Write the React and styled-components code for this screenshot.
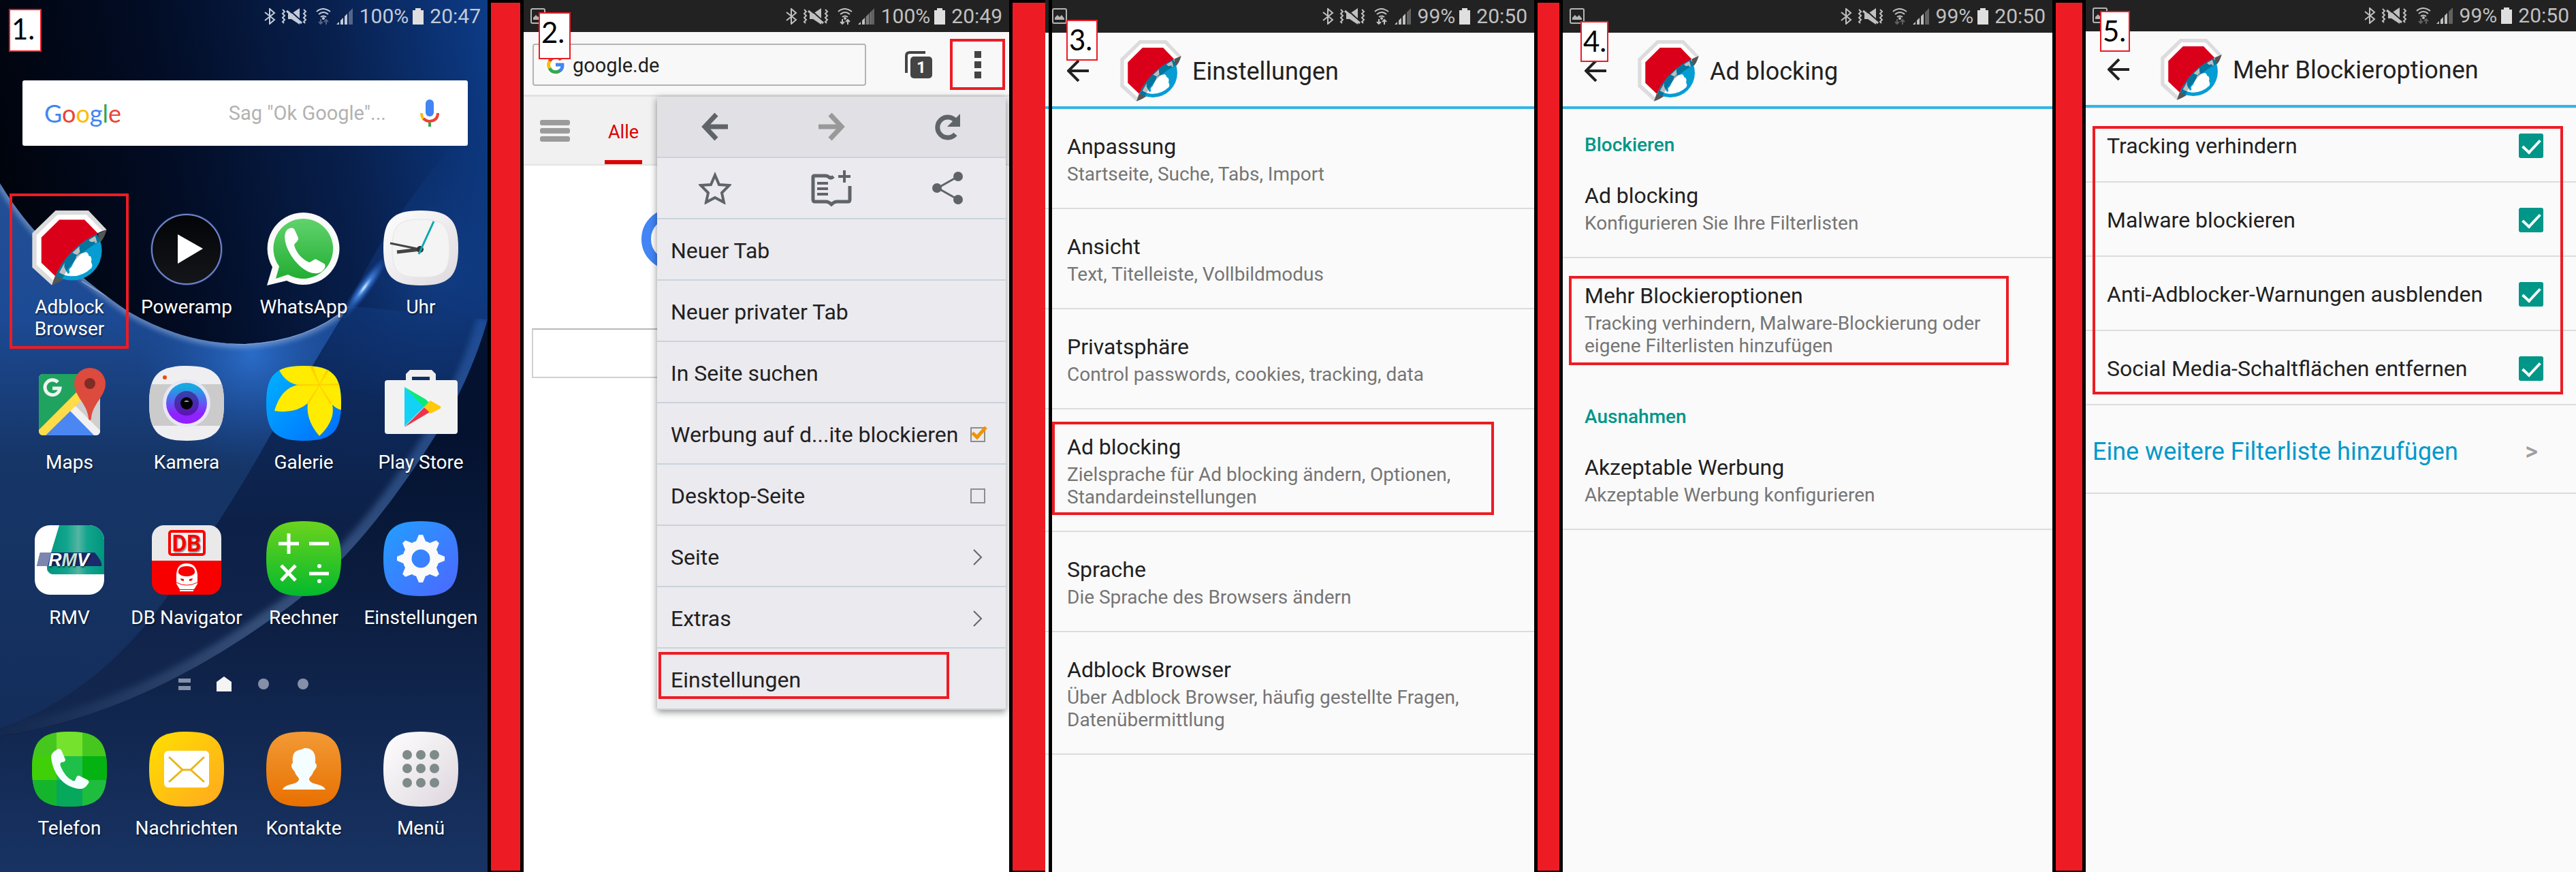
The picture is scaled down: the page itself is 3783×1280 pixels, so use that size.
import React from 'react';
import styled, { createGlobalStyle, css } from 'styled-components';

const GlobalStyle = createGlobalStyle`
  *, *::before, *::after { box-sizing: border-box; }
  body {
    margin: 0;
    font-family: Roboto, "Liberation Sans", sans-serif;
    color: #212121;
  }
  button, input { font: inherit; color: inherit; }
  button { border: 0; padding: 0; background: none; cursor: pointer; }
  a { color: inherit; text-decoration: none; }
  svg { display: block; flex: none; }
`;

const RED = '#ed1c24';

/* ---------- page ---------- */

const Page = styled.main`
  display: flex;
  min-height: 100vh;
  background: #fff;
`;

const Divider = styled.div`
  flex: 0 0 ${p => p.$width}px;
  background: ${RED};
  border: 5px solid #000;
  border-right-width: ${p => (p.$open ? 0 : 5)}px;
  border-top-width: 4px;
  border-bottom-width: 2px;
`;

const Screen = styled.section`
  position: relative;
  flex: ${p => p.$grow} 1 0;
  min-width: 0;
  overflow: hidden;
  display: flex;
  flex-direction: column;
  background: ${p => p.$bg || '#fafafa'};

  ${p => p.$rule && css`
    &::before {
      content: '';
      position: absolute;
      z-index: 2;
      top: 0;
      bottom: 0;
      left: 5px;
      width: 5px;
      background: #000;
    }
  `}
`;

const Step = styled.span`
  position: absolute;
  z-index: 4;
  left: ${p => p.$left}px;
  top: ${p => p.$top}px;
  width: ${p => p.$width || 46}px;
  height: ${p => p.$height || 60}px;
  padding-left: 2px;
  border: 2px solid ${RED};
  background: #fff;
  color: #000;
  font-family: Lato, "Open Sans", sans-serif;
  font-size: 42px;
  line-height: 54px;
`;

const marked = css`
  position: relative;
  &::after {
    content: '';
    position: absolute;
    z-index: 3;
    border: 4px solid ${RED};
    pointer-events: none;
    top: ${p => p.$mark && p.$mark.top}px;
    left: ${p => p.$mark && p.$mark.left}px;
    right: ${p => p.$mark && p.$mark.right}px;
    height: ${p => p.$mark && p.$mark.height}px;
  }
`;

/* ---------- status bar ---------- */

const StatusRow = styled.div`
  position: relative;
  display: flex;
  align-items: center;
  height: ${p => p.$height || 48}px;
  padding: 0 10px;
  background: ${p => (p.$clear ? 'transparent' : '#222')};
  color: ${p => (p.$clear ? '#c3cbd8' : '#c0c0c0')};
  font-size: 30px;
  line-height: 48px;
`;

const Percent = styled.span`
  margin-left: auto;
  display: flex;
  align-items: center;
  gap: 9px;
`;

const Battery = styled.svg`
  margin: 0 9px 0 6px;
`;

function StatusBar({ percent, time, clear, height, picture = true, weak, idle }) {
  return (
    <StatusRow $clear={clear} $height={height}>
      {picture && (
        <svg width="22" height="24" viewBox="0 0 22 24" fill="none">
          <rect x="1" y="1" width="20" height="21" rx="2" stroke="#b5b5b5" strokeWidth="2" />
          <path d="M4 17v-3l4-4 3 3 3-3 4 5v2z" fill="#b5b5b5" />
        </svg>
      )}
      <Percent>
        <svg width="131" height="24" viewBox="0 0 131 24" fill="none" stroke="currentColor">
          <path d="M1 6l14 11-7 6V1l7 6L1 18" strokeWidth="2" />
          <path d="M35 8h5l12-8v24l-12-8h-5z" fill="currentColor" stroke="none" />
          <path d="M35 1l21 19" strokeWidth="2" stroke={clear ? '#0a2150' : '#222'} />
          <path d="M33 4l22 18" strokeWidth="3" />
          <path d="M27 2l3 3-3 3 3 3-3 3 3 3-3 3 2 2M58 2l3 3-3 3 3 3-3 3 3 3-3 3 2 2" strokeWidth="2" />
          <path d="M77 5q9-8 20 0M80 9q7-6 14 0M83 13q4-3 8 0" strokeWidth="2" />
          <circle cx="87" cy="15" r="2" fill="currentColor" stroke="none" />
          <path d="M83 16v6M80 20l3 3 3-3M91 24v-6M88 20l3-3 3 3" strokeWidth="2" opacity={idle ? 0.4 : 1} />
          <path d="M106 24l4-4v4zM112 24v-6l4-4v10z" fill="currentColor" stroke="none" />
          <path d="M118 24V12l4-4v16z" fill="currentColor" stroke="none" opacity={weak ? 0.4 : 1} />
          <path d="M124 24V6l6-6v24z" fill="currentColor" stroke="none" opacity="0.4" />
          {weak && <path d="M117 24V13l8-8v19z" fill="currentColor" stroke="none" opacity="0.3" />}
        </svg>
        <span>{percent}</span>
      </Percent>
      <Battery width="16" height="24" viewBox="0 0 16 24">
        <path d="M0 3h4V0h8v3h4v21H0z" fill="#dfdfdf" />
      </Battery>
      <span>{time}</span>
    </StatusRow>
  );
}

/* ---------- shared drawings ---------- */

function AdblockLogo({ size }) {
  return (
    <svg width={size} height={size} viewBox="142 123 326 328">
      <defs>
        <clipPath id="globe"><circle cx="316" cy="298" r="131" /></clipPath>
        <clipPath id="fold"><path d="M468 207Q300 245 228 450H480V207z" /></clipPath>
      </defs>
      <path d="M244 123H388L468 207Q290 260 228 450L142 372V222z" fill="#dcdcdc" />
      <path d="M252 142H380L449 212Q290 280 234 428L161 361V231z" fill="#fff" />
      <path d="M468 207L430 224L436 265Q456 250 468 207zM228 450L243 408L285 420Q262 438 228 450z" fill="#555" />
      <g clipPath="url(#fold)">
        <circle cx="316" cy="298" r="131" fill="#069dd3" />
        <path d="M350 312l28-7 8 6 4 10 8 3 4 12-2 12 5 14-3 12q-42 40-94 36-28-3-48-16l26-46 34-14z" fill="#fff" />
        <path d="M388 255l6-6 24-14 8 28-8 3-6-6-12 2z" fill="#fff" />
        <path d="M318 308l30-28 4 24-14 14z" fill="#fff" />
        <path d="M348 288l40-36 12 10 20-4-34 32-22 16-12 2zM298 330l22-18 16 4-2 14-20 40-10 10 2 16-8 4-8-14-8-16 2-26z" fill="#069dd3" />
      </g>
      <path d="M430 224Q300 285 243 410L272 424Q332 310 440 258z" fill="#000" opacity="0.25" clipPath="url(#globe)" />
      <path d="M261 163H371L430 224Q300 285 243 410L182 352V241z" fill="#da001a" />
    </svg>
  );
}

/* ---------- home screen ---------- */

const Wallpaper = styled.svg`
  position: absolute;
  inset: 0;
  width: 100%;
  height: 100%;
`;

const SearchCard = styled.form`
  position: relative;
  display: flex;
  align-items: center;
  height: 96px;
  margin: 70px 29px 95px 33px;
  padding: 0 42px 0 32px;
  border-radius: 3px;
  background: #fff;
`;

const Wordmark = styled.span`
  font-family: Lato, sans-serif;
  font-size: 36px;
  line-height: 40px;
`;

const Letter = styled.span`
  color: ${p => p.$color};
`;

const VoiceInput = styled.input`
  flex: 1;
  min-width: 0;
  margin-right: 48px;
  border: 0;
  outline: 0;
  background: none;
  text-align: right;
  font-size: 29px;
  &::placeholder { color: #b2b2b2; opacity: 1; }
`;

const AppGrid = styled.nav`
  position: relative;
  display: grid;
  grid-template-columns: repeat(4, 1fr);
  grid-auto-rows: ${p => p.$row}px;
  padding: 0 12px 0 16px;
`;

const AppTile = styled.button`
  display: flex;
  flex-direction: column;
  align-items: center;
  gap: 16px;
  color: #fff;
  font-size: 28px;
  line-height: 32px;
  text-shadow: 1px 2px 2px rgba(0, 0, 0, .5);
  ${p => p.$mark && marked}
`;

const AppLabel = styled.span`
  white-space: pre-line;
`;

const Pager = styled.svg`
  position: relative;
  margin: 0 auto 57px;
`;

const SQUIRCLE = 'M55 0C97 0 110 14 110 55S97 110 55 110 0 96 0 55 13 0 55 0Z';
const HANDSET = 'M30 29c4-4 10-5 12 0l5 11c1 5-5 7-6 11 3 11 12 21 22 25 4 0 7-6 11-4l11 6c4 3 0 9-4 12-10 6-24 0-36-13S22 41 30 29z';

function Icon({ children }) {
  return <svg width="110" height="110" viewBox="0 0 110 110">{children}</svg>;
}

const PowerampIcon = () => (
  <Icon>
    <defs>
      <linearGradient id="amp" x2="0" y2="1"><stop stopColor="#020408" /><stop offset="1" stopColor="#141619" /></linearGradient>
    </defs>
    <circle cx="55" cy="57" r="53" fill="#5570c8" opacity="0.35" />
    <circle cx="55" cy="57" r="51" fill="url(#amp)" stroke="#6f86cc" strokeWidth="2" />
    <path d="M42 35l37 21-37 22z" fill="#fff" />
  </Icon>
);

const WhatsAppIcon = () => (
  <Icon>
    <defs>
      <linearGradient id="wa" x2="0" y2="1"><stop stopColor="#61d36c" /><stop offset="1" stopColor="#22ad33" /></linearGradient>
    </defs>
    <path d="M55 3a53 53 0 1 1-25 100L1 110l8-27A53 53 0 0 1 55 3z" fill="#fafafa" />
    <path d="M55 12a44 44 0 1 1-23 82l-18 6 5-18A44 44 0 0 1 55 12z" fill="url(#wa)" />
    <path d={HANDSET} fill="#fff" />
  </Icon>
);

const ClockIcon = () => (
  <Icon>
    <defs>
      <linearGradient id="clk" x2="1" y2="1"><stop stopColor="#fff" /><stop offset="1" stopColor="#ddd9de" /></linearGradient>
    </defs>
    <path d={SQUIRCLE} fill="url(#clk)" />
    <path d="M55 13C86 13 97 20 97 56S86 98 55 98 13 92 13 56 24 13 55 13z" fill="#f4f4f4" stroke="#e6e4e6" />
    <path d="M54 57L10 48" stroke="#444" strokeWidth="3" />
    <path d="M54 57L20 61" stroke="#444" strokeWidth="5" />
    <circle cx="54" cy="57" r="5" fill="#333" />
    <path d="M52 64L74 16" stroke="#08a9ad" strokeWidth="3" />
  </Icon>
);

const MapsIcon = () => (
  <Icon>
    <defs><clipPath id="map"><rect x="10" y="12" width="90" height="90" rx="6" /></clipPath></defs>
    <g clipPath="url(#map)">
      <path d="M10 12h90v90H10z" fill="#cfcfcf" />
      <path d="M10 12h70v30L10 102z" fill="#1fa35f" />
      <path d="M16 104l39-39 40 40z" fill="#4a87f3" />
      <path d="M55 65l7-8 46 46H92z" fill="#f1f1f1" />
      <path d="M8 96l62-62 10 9-62 61H8z" fill="#ffdc48" />
    </g>
    <path d="M38 24a11 11 0 1 0 3 9H30" fill="none" stroke="#f2f2f2" strokeWidth="5" />
    <path d="M85 3a23 23 0 0 1 23 23c0 19-20 30-21 52q-2 4-4 0C82 56 62 45 62 26A23 23 0 0 1 85 3z" fill="#dc4b3e" />
    <circle cx="85" cy="26" r="8" fill="#7f2c26" />
  </Icon>
);

const CameraIcon = () => (
  <Icon>
    <defs>
      <clipPath id="cam"><path d={SQUIRCLE} /></clipPath>
      <linearGradient id="lens" x2="0" y2="1"><stop offset="0.1" stopColor="#17a9e0" /><stop offset="0.45" stopColor="#5a62f0" /><stop offset="0.75" stopColor="#8f22ff" /></linearGradient>
    </defs>
    <path d={SQUIRCLE} fill="#efeef1" />
    <path d="M0 27h110v61H0z" fill="#cbcbcb" clipPath="url(#cam)" />
    <circle cx="55" cy="55" r="35" fill="#e9e6f4" />
    <circle cx="55" cy="55" r="30" fill="url(#lens)" />
    <circle cx="55" cy="55" r="18" fill="#3a0e80" opacity="0.6" />
    <circle cx="55" cy="55" r="9" fill="#000" />
    <path d="M51 53q4-5 8 0z" fill="#999" />
    <circle cx="23" cy="17" r="3" fill="#ef4a0a" />
  </Icon>
);

const GalleryIcon = () => (
  <Icon>
    <defs>
      <clipPath id="gal"><path d={SQUIRCLE} /></clipPath>
      <linearGradient id="sky" x2="1" y2="1"><stop stopColor="#00b4ff" /><stop offset="1" stopColor="#006cff" /></linearGradient>
    </defs>
    <path d={SQUIRCLE} fill="url(#sky)" />
    <g clipPath="url(#gal)">
      <path d="M19 6L24 0h90v66q-10-2-17-9Q102 80 78 103 58 80 61 55 42 71 12 66 22 32 47 28 28 25 19 6z" fill="#ffec00" />
      <path d="M78 28L64 0h4zM78 28L92 0h4zM78 28l-34 1v-2zM78 28h34v-2zM78 28L62 56l-2-1zM78 28l16 28 2-1z" fill="#ffc400" stroke="#ffc400" opacity="0.7" />
    </g>
  </Icon>
);

const PlayIcon = () => (
  <Icon>
    <path d="M33 24V12l6-6h32l6 6v12h-9V16H42v8z" fill="#efefef" />
    <rect x="2" y="21" width="107" height="79" rx="4" fill="#f2f2f2" />
    <path d="M31 31v58l29-29z" fill="#12d3f5" />
    <path d="M31 31l31 18 6 6-8 6z" fill="#0bea78" />
    <path d="M31 90l29-29 8 7z" fill="#ef3349" />
    <path d="M60 60l9-9 14 8q3 2 0 4l-14 7z" fill="#ffc809" />
  </Icon>
);

const RmvIcon = () => (
  <Icon>
    <defs>
      <clipPath id="rmv"><rect x="4" y="6" width="102" height="102" rx="22" /></clipPath>
      <linearGradient id="teal"><stop stopColor="#00957c" /><stop offset="0.35" stopColor="#12a58e" /><stop offset="0.55" stopColor="#55b5a2" /><stop offset="0.7" stopColor="#12a58e" /><stop offset="1" stopColor="#00957c" /></linearGradient>
    </defs>
    <g clipPath="url(#rmv)">
      <path d="M4 6h102v102H4z" fill="#fff" />
      <path d="M40 6h66v72H30q-9-2-8-12z" fill="url(#teal)" />
      <path d="M12 46h80q12 14 10 20H7z" fill="#1a2a6c" />
      <path d="M12 46h16l-5 20H7z" fill="#7c87b0" />
      <text x="24" y="66" fontFamily="Liberation Sans, sans-serif" fontWeight="700" fontStyle="italic" fontSize="27" fill="#fff">R<tspan fill="#c4e4d3">M</tspan>V</text>
    </g>
  </Icon>
);

const DbIcon = () => (
  <Icon>
    <defs><clipPath id="db"><rect x="4" y="6" width="102" height="102" rx="18" /></clipPath></defs>
    <g clipPath="url(#db)">
      <path d="M4 6h102v52H4z" fill="#e9e9e9" />
      <path d="M4 58h102v50H4z" fill="#f80000" />
    </g>
    <rect x="30" y="15" width="51" height="34" rx="3" fill="#f4f4f4" stroke="#f80000" strokeWidth="4" />
    <text x="55" y="44" textAnchor="middle" fontFamily="Roboto, sans-serif" fontWeight="700" fontSize="33" fill="#f80000">DB</text>
    <path d="M40 92V78Q41 62 55 62T71 78V92L66 100H45z" fill="#fff" />
    <path d="M43 76q-1-10 12-10t12 10q-3 5-12 5t-12-5z" fill="#f80000" />
    <path d="M46 84l5 1v3l-4-1zM64 84l-5 1v3l4-1z" fill="#f80000" />
    <path d="M40 90q15 8 31 0" fill="none" stroke="#f80000" strokeWidth="1" />
    <path d="M45 102h20" stroke="#fff" strokeWidth="2" />
  </Icon>
);

const CalcIcon = () => (
  <Icon>
    <defs><linearGradient id="calc" x2="0" y2="1"><stop stopColor="#6cd31d" /><stop offset="1" stopColor="#03b92e" /></linearGradient></defs>
    <path d={SQUIRCLE} fill="url(#calc)" />
    <path d="M18 33h30M33 18v30M63 33h29M22 65l21 22M43 65L22 87M63 77h29" stroke="#fff" strokeWidth="5" />
    <circle cx="78" cy="66" r="3" fill="#fff" />
    <circle cx="78" cy="88" r="3" fill="#fff" />
  </Icon>
);

const GearIcon = () => (
  <Icon>
    <defs><linearGradient id="gear" x2="1" y2="1"><stop offset="0.1" stopColor="#2699ff" /><stop offset="0.9" stopColor="#4a6cff" /></linearGradient></defs>
    <path d={SQUIRCLE} fill="url(#gear)" />
    <g fill="#fafafa">
      {[0, 45, 90, 135, 180, 225, 270, 315].map(a => (
        <path key={a} d="M47 32l5-12h6l5 12z" transform={`rotate(${a} 55 55)`} />
      ))}
    </g>
    <circle cx="55" cy="55" r="20" fill="none" stroke="#fafafa" strokeWidth="13" />
  </Icon>
);

const PhoneIcon = () => (
  <Icon>
    <defs><clipPath id="tel"><path d={SQUIRCLE} /></clipPath></defs>
    <g clipPath="url(#tel)">
      <path d="M0 0h110v110H0z" fill="#46c71d" />
      <path d="M36 0h38v36H36z" fill="#75e22d" />
      <path d="M0 36h36v35H0z" fill="#3fd007" />
      <path d="M36 36h38v35H36z" fill="#1ec04a" />
      <path d="M74 36h36v35H74z" fill="#04b311" />
      <path d="M0 71h36v39H0z" fill="#14b52c" />
      <path d="M36 71h38v39H36z" fill="#06a85c" />
      <path d="M74 71h36v39H74z" fill="#1fbd3d" />
    </g>
    <path d="M37 26q4-2 6 1l6 14q0 4-6 4-3 2 0 8 6 14 17 19 3 1 4-2 2-7 6-5l12 6q3 3 0 6-5 8-13 7C45 81 30 60 28 37q0-6 9-11z" fill="#f4fdff" />
  </Icon>
);

const MailIcon = () => (
  <Icon>
    <defs><linearGradient id="msg" x2="1" y2="1"><stop stopColor="#ffe000" /><stop offset="1" stopColor="#ffa81f" /></linearGradient></defs>
    <path d={SQUIRCLE} fill="url(#msg)" />
    <rect x="22" y="28" width="66" height="54" rx="6" fill="#fff" />
    <path d="M30 38l19 18h12l19-18M30 73l19-17M80 73L61 56" fill="none" stroke="#eab718" strokeWidth="3" strokeLinecap="round" />
  </Icon>
);

const ContactIcon = () => (
  <Icon>
    <defs><linearGradient id="con" x2="0" y2="1"><stop stopColor="#f29a35" /><stop offset="1" stopColor="#e87000" /></linearGradient></defs>
    <path d={SQUIRCLE} fill="url(#con)" />
    <path d="M56 24c15 0 17 11 16 22 5 4 0 9-3 13-1 5-5 7-6 10 0 10 20 6 24 16H24c4-10 24-6 24-16-1-3-5-5-6-10-3-4-8-9-3-13-1-14 2-18 13-20z" fill="#f4fdff" />
  </Icon>
);

const MenuIcon = () => (
  <Icon>
    <defs><linearGradient id="mnu" x2="1" y2="1"><stop stopColor="#fff" /><stop offset="1" stopColor="#ddd6dd" /></linearGradient></defs>
    <path d={SQUIRCLE} fill="url(#mnu)" />
    {[34, 54, 75].map(y => [35, 55, 75].map(x => (
      <circle key={x + '-' + y} cx={x} cy={y} r="7" fill="#7f8a8a" />
    )))}
  </Icon>
);

const apps = [
  { label: 'Adblock\nBrowser', icon: <AdblockLogo size={110} />, mark: { top: -25, left: -2, right: -1, height: 228 } },
  { label: 'Poweramp', icon: <PowerampIcon /> },
  { label: 'WhatsApp', icon: <WhatsAppIcon /> },
  { label: 'Uhr', icon: <ClockIcon /> },
  { label: 'Maps', icon: <MapsIcon /> },
  { label: 'Kamera', icon: <CameraIcon /> },
  { label: 'Galerie', icon: <GalleryIcon /> },
  { label: 'Play Store', icon: <PlayIcon /> },
  { label: 'RMV', icon: <RmvIcon /> },
  { label: 'DB Navigator', icon: <DbIcon /> },
  { label: 'Rechner', icon: <CalcIcon /> },
  { label: 'Einstellungen', icon: <GearIcon /> },
];

const dock = [
  { label: 'Telefon', icon: <PhoneIcon /> },
  { label: 'Nachrichten', icon: <MailIcon /> },
  { label: 'Kontakte', icon: <ContactIcon /> },
  { label: 'Menü', icon: <MenuIcon /> },
];

function HomeWallpaper() {
  return (
    <Wallpaper viewBox="0 0 716 1280" preserveAspectRatio="none">
      <defs>
        <linearGradient id="space" x1="0" y1="0.3" x2="1" y2="0">
          <stop stopColor="#00030a" />
          <stop offset="0.35" stopColor="#020c24" />
          <stop offset="0.7" stopColor="#08204e" />
          <stop offset="1" stopColor="#0d3c88" />
        </linearGradient>
        <linearGradient id="deep" x2="0" y1="0.2" y2="1">
          <stop stopColor="#04122f" />
          <stop offset="0.5" stopColor="#0e2146" />
          <stop offset="1" stopColor="#183363" />
        </linearGradient>
        <linearGradient id="wave" x2="0" y2="1">
          <stop stopColor="#234f94" />
          <stop offset="0.25" stopColor="#1c4a94" />
          <stop offset="0.5" stopColor="#163668" />
          <stop offset="1" stopColor="#142d5a" />
        </linearGradient>
        <linearGradient id="mid" x2="0" y2="1">
          <stop stopColor="#0d2e68" />
          <stop offset="0.5" stopColor="#0d2148" />
          <stop offset="1" stopColor="#14284f" />
        </linearGradient>
        <radialGradient id="shine" gradientUnits="userSpaceOnUse" cx="370" cy="520" r="170">
          <stop stopColor="#2a6cc8" />
          <stop offset="1" stopColor="#1c4fa0" stopOpacity="0" />
        </radialGradient>
        <radialGradient id="flare">
          <stop stopColor="#e8f4ff" />
          <stop offset="0.3" stopColor="#4a90f0" stopOpacity="0.8" />
          <stop offset="1" stopColor="#1a55c0" stopOpacity="0" />
        </radialGradient>
        <radialGradient id="haze" gradientUnits="userSpaceOnUse" cx="640" cy="400" r="240">
          <stop stopColor="#15448f" stopOpacity="0.7" />
          <stop offset="1" stopColor="#0d3478" stopOpacity="0" />
        </radialGradient>
        <linearGradient id="edge" x1="1" y1="0" x2="0" y2="1">
          <stop stopColor="#2a64b8" stopOpacity="0.5" />
          <stop offset="0.6" stopColor="#7a9ccc" stopOpacity="0.35" />
          <stop offset="1" stopColor="#7a9ccc" stopOpacity="0" />
        </linearGradient>
        <filter id="soft" x="-20%" y="-20%" width="140%" height="140%"><feGaussianBlur stdDeviation="5" /></filter>
        <clipPath id="lower"><path d="M0 269Q60 370 188 457Q270 505 360 505Q455 500 512 449L398 637Q330 760 239 885Q140 1020 0 1069z" /></clipPath>
        <clipPath id="bend"><path d="M512 449L716 469Q690 560 639 640Q520 830 398 909Q200 1050 0 1081V800z" /></clipPath>
      </defs>
      <path d="M0 0h716v1280H0z" fill="url(#space)" />
      <path d="M716 469Q690 560 639 640Q520 830 398 909Q200 1050 0 1081V1280H716z" fill="url(#deep)" />
      <path d="M512 449L716 469Q690 560 639 640Q520 830 398 909Q200 1050 0 1081V1000z" fill="url(#mid)" />
      <path d="M512 449Q560 330 716 150V469Q700 530 660 600L450 560z" fill="url(#haze)" />
      <g clipPath="url(#bend)">
        <path d="M716 469Q690 560 639 640Q520 830 398 909Q200 1050 0 1081" fill="none" stroke="url(#edge)" strokeWidth="30" filter="url(#soft)" />
      </g>
      <g clipPath="url(#lower)">
        <path d="M0 260h560v820H0z" fill="url(#wave)" />
        <path d="M150 350h440v350H150z" fill="url(#shine)" />
        <path d="M0 269Q60 370 188 457Q270 505 360 505Q455 500 512 449" fill="none" stroke="#a9bfe4" strokeWidth="7" opacity="0.8" filter="url(#soft)" />
      </g>
      <path d="M120 413Q270 505 360 505Q455 500 512 449" fill="none" stroke="#b5c8e8" strokeWidth="2" opacity="0.5" clipPath="url(#lower)" />
      <ellipse cx="535" cy="422" rx="58" ry="11" fill="url(#flare)" transform="rotate(-54 535 422)" />
    </Wallpaper>
  );
}

function HomeScreen() {
  const word = [['G', '#4285f4'], ['o', '#ea4335'], ['o', '#fbbc05'], ['g', '#4285f4'], ['l', '#34a853'], ['e', '#ea4335']];
  return (
    <Screen $grow={716} $bg="#04122f">
      <HomeWallpaper />
      <StatusBar percent="100%" time="20:47" clear idle picture={false} />
      <Step $left={13} $top={13} $width={48} $height={63}>1.</Step>
      <SearchCard>
        <Wordmark>{word.map(([ch, color], i) => <Letter key={i} $color={color}>{ch}</Letter>)}</Wordmark>
        <VoiceInput aria-label="Google" placeholder={'Sag "Ok Google"...'} />
        <button type="button" aria-label="Sprachsuche">
          <svg width="28" height="40" viewBox="0 0 28 40" fill="none">
            <rect x="8" y="0" width="12" height="25" rx="6" fill="#4285f4" />
            <path d="M2 20q0 6 4 10" stroke="#fbbc05" strokeWidth="4" />
            <path d="M5 28q4 4 9 4 12-1 12-12" stroke="#ea4335" strokeWidth="4" />
            <path d="M14 34v6" stroke="#34a853" strokeWidth="4" />
          </svg>
        </button>
      </SearchCard>
      <AppGrid $row={228}>
        {apps.map(a => (
          <AppTile key={a.label} $mark={a.mark}>{a.icon}<AppLabel>{a.label}</AppLabel></AppTile>
        ))}
      </AppGrid>
      <Pager width="192" height="24" viewBox="0 0 192 24">
        <path d="M0 3h18v6H0zM0 14h18v6H0z" fill="#8590a8" />
        <path d="M56 8l11-8 11 8v14H56z" fill="#f4f4f4" />
        <circle cx="125" cy="11" r="8" fill="#8590a8" />
        <circle cx="183" cy="11" r="8" fill="#8590a8" />
      </Pager>
      <AppGrid $row={160}>
        {dock.map(a => (
          <AppTile key={a.label}>{a.icon}<AppLabel>{a.label}</AppLabel></AppTile>
        ))}
      </AppGrid>
    </Screen>
  );
}

/* ---------- browser ---------- */

const Toolbar = styled.header`
  display: flex;
  align-items: center;
  height: 95px;
  padding: 3px 6px 0 13px;
  border-bottom: 3px solid #e2e2e2;
  background: #f8f8f8;
`;

const UrlBox = styled.label`
  display: flex;
  align-items: center;
  gap: 9px;
  flex: 1;
  min-width: 0;
  height: 62px;
  padding-left: 16px;
  border: 2px solid #b3b3b3;
  border-radius: 4px;
  font-size: 29px;
`;

const UrlInput = styled.input`
  flex: 1;
  min-width: 0;
  padding: 2px 0 0;
  border: 0;
  outline: 0;
  background: none;
`;

const TabsButton = styled.button`
  margin: 0 26px 0 57px;
`;

const MoreButton = styled.button`
  display: grid;
  place-items: center;
  width: 81px;
  height: 75px;
  border: 4px solid ${RED};
`;

const PageBody = styled.div`
  position: relative;
  flex: 1;
  background: #fff;
`;

const TabStrip = styled.nav`
  display: flex;
  align-items: stretch;
  gap: 51px;
  height: 101px;
  padding-left: 24px;
  border-bottom: 2px solid #e3e3e3;
  background: #f1f1f1;
`;

const ActiveTab = styled.a`
  width: 55px;
  border-bottom: 6px solid #dd0000;
  color: #dd0000;
  font-size: 27px;
  line-height: 104px;
  text-align: center;
`;

const LogoRing = styled.svg`
  margin: 63px 0 0 173px;
`;

const PageSearch = styled.input`
  display: block;
  width: 92%;
  height: 73px;
  margin: 86px 0 0 12px;
  border: 2px solid #d0d0d0;
  border-top-color: #b8b8b8;
`;

const Menu = styled.div`
  position: absolute;
  top: 0;
  right: 5px;
  width: 512px;
  background: #ebeaef;
  box-shadow: 0 3px 10px rgba(0, 0, 0, .45);
`;

const menuRow = css`
  display: flex;
  align-items: center;
  width: 100%;
  height: 90px;
  border-bottom: 2px solid #c9d3dc;
`;

const IconRow = styled.div`
  ${menuRow}
  background: ${p => (p.$dark ? '#e1e0e5' : 'transparent')};
  button {
    flex: 1;
    display: grid;
    place-items: center;
  }
`;

const MenuItem = styled.div`
  ${menuRow}
  justify-content: space-between;
  padding: 4px ${p => p.$end || 30}px 0 20px;
  font-size: 32px;
  text-align: left;
  ${p => p.$mark && marked}
`;

const SmallCheck = styled.input`
  appearance: none;
  position: relative;
  width: 22px;
  height: 22px;
  margin: 0;
  border: 2px solid #8d8d8d;
  &:checked::after {
    content: '';
    position: absolute;
    left: 5px;
    top: -7px;
    width: 12px;
    height: 22px;
    border: solid #f39200;
    border-width: 0 5px 5px 0;
    transform: rotate(42deg);
  }
`;

const Chevron = () => (
  <svg width="14" height="24" viewBox="0 0 14 24" fill="none" stroke="#666" strokeWidth="2"><path d="M1 1l11 11L1 23" /></svg>
);

function BrowserScreen() {
  return (
    <Screen $grow={713} $bg="#fff">
      <StatusBar percent="100%" time="20:49" height={47} weak />
      <Step $left={22} $top={18} $width={47} $height={69}>2.</Step>
      <Toolbar>
        <UrlBox>
          <svg width="32" height="32" viewBox="0 0 32 32" fill="none" strokeWidth="5">
            <circle cx="16" cy="16" r="16" fill="#fff" />
            <path d="M24 9A10 10 0 0 0 7 11" stroke="#ea4335" />
            <path d="M7 11a10 10 0 0 0 0 10" stroke="#fbbc05" />
            <path d="M7 21a10 10 0 0 0 16 3" stroke="#34a853" />
            <path d="M16 16h10a10 10 0 0 1-4 9" stroke="#4285f4" />
          </svg>
          <UrlInput aria-label="Adresse" defaultValue="google.de" />
        </UrlBox>
        <TabsButton aria-label="Tabs">
          <svg width="40" height="40" viewBox="0 0 40 40">
            <path d="M2 32V7q0-5 5-5h23" fill="none" stroke="#444" strokeWidth="4" />
            <rect x="8" y="8" width="32" height="32" rx="5" fill="#444" />
            <text x="24" y="32" textAnchor="middle" fontSize="24" fontWeight="700" fill="#fff">1</text>
          </svg>
        </TabsButton>
        <MoreButton aria-label="Menü">
          <svg width="10" height="40" viewBox="0 0 10 40" fill="#444"><path d="M0 0h10v10H0zM0 15h10v10H0zM0 30h10v10H0z" /></svg>
        </MoreButton>
      </Toolbar>
      <PageBody>
        <TabStrip>
          <button aria-label="Navigation">
            <svg width="44" height="32" viewBox="0 0 44 32" fill="#9b9b9b">
              <rect width="44" height="8" rx="3" /><rect y="12" width="44" height="8" rx="3" /><rect y="24" width="44" height="8" rx="3" />
            </svg>
          </button>
          <ActiveTab href="#alle">Alle</ActiveTab>
        </TabStrip>
        <LogoRing width="90" height="90" viewBox="0 0 90 90">
          <circle cx="45" cy="45" r="38" fill="none" stroke="#4285f4" strokeWidth="14" />
        </LogoRing>
        <PageSearch aria-label="Suche" />
        <Menu>
          <IconRow $dark>
            <button aria-label="Zurück">
              <svg width="40" height="42" viewBox="0 0 40 42" fill="none" stroke="#5f6468" strokeWidth="7"><path d="M39 21H7M22 3L5 21l17 18" /></svg>
            </button>
            <button aria-label="Vorwärts">
              <svg width="40" height="42" viewBox="0 0 40 42" fill="none" stroke="#999" strokeWidth="7"><path d="M1 21h32M18 3l17 18-17 18" /></svg>
            </button>
            <button aria-label="Neu laden">
              <svg width="38" height="40" viewBox="0 0 38 40">
                <path d="M30 11A15 15 0 1 0 30 31" fill="none" stroke="#5f6468" strokeWidth="7" />
                <path d="M37 1v19H18z" fill="#5f6468" />
              </svg>
            </button>
          </IconRow>
          <IconRow>
            <button aria-label="Lesezeichen">
              <svg width="48" height="48" viewBox="0 0 48 48" fill="none" stroke="#5f6468" strokeWidth="4"><path d="M24 5l6 14 15 1-11 11 3 14-13-7-13 7 3-14L3 20l15-1z" /></svg>
            </button>
            <button aria-label="Leseliste">
              <svg width="60" height="54" viewBox="0 0 60 54" fill="none" stroke="#5f6468">
                <path d="M33 10q-4 4-8 0-2-1-4-1H5q-2 0-2 2v33q0 3 3 3h16q4 0 8 4 4-4 8-4h16q3 0 3-3V24" strokeWidth="5" />
                <path d="M9 20h16M9 28h16M9 36h16" strokeWidth="4" />
                <path d="M49 1v18M40 10h18" strokeWidth="4" />
              </svg>
            </button>
            <button aria-label="Teilen">
              <svg width="46" height="48" viewBox="0 0 46 48">
                <path d="M38 7L8 24l30 17" fill="none" stroke="#5f6468" strokeWidth="3" />
                <g fill="#5f6468"><circle cx="38" cy="7" r="7" /><circle cx="7" cy="24" r="7" /><circle cx="38" cy="41" r="7" /></g>
              </svg>
            </button>
          </IconRow>
          <MenuItem as="button">Neuer Tab</MenuItem>
          <MenuItem as="button">Neuer privater Tab</MenuItem>
          <MenuItem as="button">In Seite suchen</MenuItem>
          <MenuItem as="label">Werbung auf d...ite blockieren<SmallCheck type="checkbox" defaultChecked /></MenuItem>
          <MenuItem as="label">Desktop-Seite<SmallCheck type="checkbox" /></MenuItem>
          <MenuItem as="button" $end={34}>Seite<Chevron /></MenuItem>
          <MenuItem as="button" $end={34}>Extras<Chevron /></MenuItem>
          <MenuItem as="button" $mark={{ top: 5, left: 2, right: 83, height: 69 }}>Einstellungen</MenuItem>
        </Menu>
      </PageBody>
    </Screen>
  );
}

/* ---------- settings ---------- */

const TitleBar = styled.header`
  display: flex;
  align-items: center;
  height: 112px;
  padding: 4px 0 0 32px;
  border-bottom: 4px solid #33b5e5;
`;

const BackButton = styled.button`
  margin-right: 46px;
`;

const Title = styled.h1`
  margin: 0;
  padding: 2px 0 0 16px;
  font-size: 36px;
  font-weight: 400;
  line-height: 48px;
`;

const Pref = styled.a`
  display: block;
  padding: 34px 32px 33px;
  border-bottom: 2px solid ${p => (p.$last ? 'transparent' : '#dcdcdc')};
  ${p => p.$mark && marked}
`;

const PrefTitle = styled.div`
  font-size: 32px;
  line-height: 42px;
`;

const PrefSummary = styled.div`
  margin-top: 3px;
  color: #757575;
  font-size: 28px;
  line-height: 33px;
  white-space: pre-line;
`;

const Category = styled.h2`
  margin: 0;
  padding: 36px 32px 3px;
  color: #009688;
  font-size: 28px;
  font-weight: 500;
  line-height: 33px;
`;

function Header({ title }) {
  return (
    <TitleBar>
      <BackButton aria-label="Zurück">
        <svg width="32" height="32" viewBox="0 0 32 32" fill="none" stroke="#212121" strokeWidth="4"><path d="M32 16H3M17 1L2 16l15 15" /></svg>
      </BackButton>
      <AdblockLogo size={90} />
      <Title>{title}</Title>
    </TitleBar>
  );
}

function Item({ title, summary, mark, last }) {
  return (
    <Pref href="#" $mark={mark} $last={last}>
      <PrefTitle>{title}</PrefTitle>
      <PrefSummary>{summary}</PrefSummary>
    </Pref>
  );
}

function SettingsScreen() {
  return (
    <Screen $grow={718} $rule>
      <StatusBar percent="99%" time="20:50" />
      <Step $left={31} $top={29}>3.</Step>
      <Header title="Einstellungen" />
      <Item title="Anpassung" summary="Startseite, Suche, Tabs, Import" />
      <Item title="Ansicht" summary="Text, Titelleiste, Vollbildmodus" />
      <Item title="Privatsphäre" summary="Control passwords, cookies, tracking, data" />
      <Item
        title="Ad blocking"
        summary={'Zielsprache für Ad blocking ändern, Optionen,\nStandardeinstellungen'}
        mark={{ top: 18, left: 10, right: 59, height: 137 }}
      />
      <Item title="Sprache" summary="Die Sprache des Browsers ändern" />
      <Item title="Adblock Browser" summary={'Über Adblock Browser, häufig gestellte Fragen,\nDatenübermittlung'} />
    </Screen>
  );
}

function AdBlockingScreen() {
  return (
    <Screen $grow={719}>
      <StatusBar percent="99%" time="20:50" idle />
      <Step $left={26} $top={31} $width={41}>4.</Step>
      <Header title="Ad blocking" />
      <Category>Blockieren</Category>
      <Item title="Ad blocking" summary="Konfigurieren Sie Ihre Filterlisten" />
      <Item
        last
        title="Mehr Blockieroptionen"
        summary={'Tracking verhindern, Malware-Blockierung oder\neigene Filterlisten hinzufügen'}
        mark={{ top: 26, left: 9, right: 64, height: 131 }}
      />
      <Category>Ausnahmen</Category>
      <Item title="Akzeptable Werbung" summary="Akzeptable Werbung konfigurieren" />
    </Screen>
  );
}

/* ---------- more options ---------- */

const OptionList = styled.div`
  border-top: 1px solid #dcdcdc;
  ${marked}
`;

const Option = styled.label`
  display: flex;
  align-items: center;
  justify-content: space-between;
  height: 109px;
  padding: 2px 48px 0 31px;
  border-bottom: 2px solid #dcdcdc;
  font-size: 32px;
`;

const Check = styled.input`
  appearance: none;
  position: relative;
  width: 36px;
  height: 36px;
  margin: 0;
  border-radius: 3px;
  background: #009688;
  &::after {
    content: '';
    position: absolute;
    left: 11px;
    top: 3px;
    width: 15px;
    height: 26px;
    border: solid #fff;
    border-width: 0 4px 4px 0;
    transform: rotate(43deg);
  }
`;

const AddLink = styled.a`
  display: flex;
  align-items: center;
  justify-content: space-between;
  height: 130px;
  padding: 8px 56px 0 10px;
  border-bottom: 2px solid #dcdcdc;
  color: #0099cc;
  font-size: 36px;
`;

const More = styled.span`
  color: #9e9e9e;
  font-weight: 500;
`;

function MoreOptionsScreen() {
  const options = ['Tracking verhindern', 'Malware blockieren', 'Anti-Adblocker-Warnungen ausblenden', 'Social Media-Schaltflächen entfernen'];
  return (
    <Screen $grow={720}>
      <StatusBar percent="99%" time="20:50" height={46} idle />
      <Step $left={21} $top={16} $width={44}>5.</Step>
      <Header title="Mehr Blockieroptionen" />
      <OptionList $mark={{ top: 26, left: 10, right: 19, height: 394 }}>
        {options.map(o => (
          <Option key={o}>{o}<Check type="checkbox" defaultChecked /></Option>
        ))}
      </OptionList>
      <AddLink href="#">Eine weitere Filterliste hinzufügen<More>&gt;</More></AddLink>
    </Screen>
  );
}

function App() {
  return (
    <Page>
      <GlobalStyle />
      <HomeScreen />
      <Divider $width={53} />
      <BrowserScreen />
      <Divider $width={53} $open />
      <SettingsScreen />
      <Divider $width={42} />
      <AdBlockingScreen />
      <Divider $width={49} />
      <MoreOptionsScreen />
    </Page>
  );
}

export default App;
